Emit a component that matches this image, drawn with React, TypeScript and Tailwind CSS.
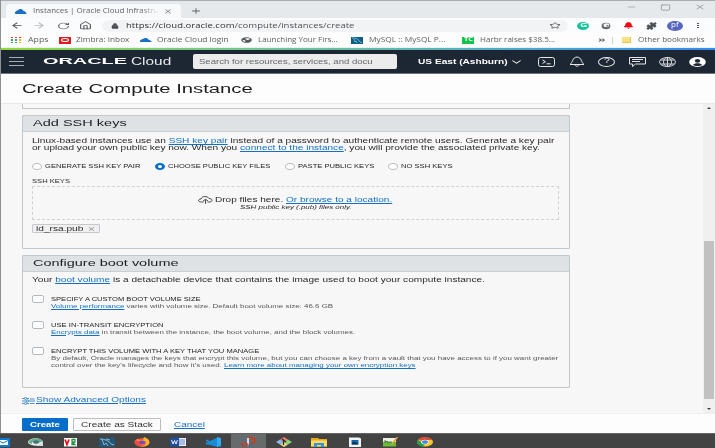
import { useLayoutEffect, useRef, type ReactNode } from "react";
import {
  ArrowLeft, ArrowRight, RotateCw, House, Lock, Star, Bell, Puzzle, X, Plus, Minus, Square,
  ChevronDown,
} from "lucide-react";

const ui = "font-['Open_Sans',sans-serif]";
const stretch = { preserveAspectRatio: "none" } as const;

/* One line of text, widened to fill the width of its box. */
function T({ className = "", children }: { className?: string; children: ReactNode }) {
  const outer = useRef<HTMLSpanElement>(null);
  const inner = useRef<HTMLSpanElement>(null);
  useLayoutEffect(() => {
    if (outer.current && inner.current) {
      inner.current.style.transform = `scaleX(${outer.current.clientWidth / inner.current.offsetWidth})`;
    }
  }, []);
  return (
    <span ref={outer} className={`block shrink-0 leading-[1.15] ${className}`}>
      <span ref={inner} className="block w-max origin-left whitespace-nowrap">{children}</span>
    </span>
  );
}

function A({ children }: { children: ReactNode }) {
  return <a className="text-[#1470c4] underline decoration-[0.6px] underline-offset-1">{children}</a>;
}

function CloudMark({ className }: { className: string }) {
  return (
    <svg viewBox="0 0 24 12" {...stretch} className={`shrink-0 ${className}`}>
      <path d="M3 12a3 3 0 0 1-1-6 4 4 0 0 1 4-3 6 6 0 0 1 11 2 4 4 0 0 1 4 3 2.200 2.200 0 0 1 1 4z" fill="#1b6fc2" />
    </svg>
  );
}

function TabStrip() {
  return (
    <div className="flex h-[18px] items-end border-t border-[#a9adb1] bg-[#e6e9ec] pl-[5px]">
      <div className="flex h-[14px] w-[175px] items-center rounded-t-[4px] bg-[#f8f9fb] pl-[9px]">
        <CloudMark className="h-[5px] w-[12px]" />
        <div className="ml-[6px] w-[126px] overflow-hidden [mask-image:linear-gradient(90deg,#000_85%,transparent)]">
          <T className="w-[126px] text-[7px] text-[#5f6368]">Instances | Oracle Cloud Infrastru</T>
        </div>
        <X {...stretch} className="ml-[4px] h-[7px] w-[10px] text-[#5f6368]" />
      </div>
      <Plus {...stretch} className="mb-[3px] ml-[9px] h-[8px] w-[12px] text-[#4c5055]" />
      <div className="mb-[7px] ml-auto flex items-center text-[#8b8f94]">
        <Minus {...stretch} strokeWidth={1.5} className="h-[8px] w-[11px]" />
        <Square {...stretch} strokeWidth={2} className="ml-[23px] h-[7px] w-[11px]" />
        <X {...stretch} strokeWidth={1.8} className="mr-[9px] ml-[23px] h-[8px] w-[12px]" />
      </div>
    </div>
  );
}

function Toolbar() {
  return (
    <div className="flex h-[15px] items-center bg-[#fbfcfd] text-[#4c5055]">
      <ArrowLeft {...stretch} className="ml-[9px] h-[9px] w-[14px]" />
      <ArrowRight {...stretch} className="ml-[8px] h-[9px] w-[14px] text-[#b3b6ba]" />
      <RotateCw {...stretch} className="ml-[11px] h-[8px] w-[13px]" />
      <House {...stretch} className="ml-[9px] h-[9px] w-[13px]" />
      <div className="ml-[10px] flex h-[12px] w-[466px] items-center rounded-[8px/6px] bg-[#f1f3f4] pl-[9px]">
        <Lock {...stretch} fill="currentColor" className="h-[6px] w-[8px]" />
        <T className={`${ui} ml-[7px] w-[228px] text-[7.500px] text-[#50545a]`}>
          <span className="text-[#303236]">https://cloud.oracle.com</span>/compute/instances/create
        </T>
        <Star {...stretch} className="mr-[7px] ml-auto h-[7px] w-[12px]" />
      </div>
      <span className="ml-[9px] flex h-[8px] w-[12px] items-center justify-center rounded-[50%] bg-[#15c39a]">
        <T className="w-[7px] text-[6px] font-bold text-white">G</T>
      </span>
      <svg viewBox="0 0 12 8" {...stretch} className="ml-[12px] h-[8px] w-[10px]">
        <ellipse cx="6" cy="4" rx="5.300" ry="3.300" fill="#686b6e" /><ellipse cx="6.500" cy="3.200" rx="3.500" ry="1.900" fill="#f3f3f3" />
        <path d="M6.500 3h2.500v1.500h-2.500z" fill="#777" />
      </svg>
      <Bell {...stretch} fill="#f00615" className="ml-[12px] h-[7px] w-[11px] text-[#f00615]" />
      <Puzzle {...stretch} fill="currentColor" className="ml-[12px] h-[8px] w-[11px]" />
      <span className="ml-[10px] flex h-[10px] w-[16px] items-center justify-center rounded-[50%] bg-[#5566bd]">
        <T className="w-[8px] text-[7px] text-white">pf</T>
      </span>
      <span className="ml-[14px] flex flex-col gap-px">
        <i className="h-[1px] w-[2px] bg-[#55595e]" /><i className="h-[1px] w-[2px] bg-[#55595e]" /><i className="h-[1px] w-[2px] bg-[#55595e]" />
      </span>
    </div>
  );
}

const dots = ["#e33b2e", "#e33b2e", "#e33b2e", "#32a853", "#4285f4", "#f0b51b", "#32a853", "#32a853", "#f0b51b"];

function Bookmarks() {
  return (
    <div className="flex h-[14px] items-center bg-[#fdfdfd] text-[7px] text-[#5a5d61]">
      <div className="ml-[10px] grid h-[6px] w-[10px] shrink-0 grid-cols-3 gap-x-[2px] gap-y-[1px]">
        {dots.map((c, i) => <i key={i} style={{ backgroundColor: c }} />)}
      </div>
      <T className="ml-[7px] w-[20px]">Apps</T>
      <span className="ml-[11px] flex h-[7px] w-[12px] shrink-0 items-center justify-center bg-[#e21b22]">
        <i className="h-[4px] w-[8px] rounded-[50%] border border-white" />
      </span>
      <T className="ml-[5px] w-[53px]">Zimbra: Inbox</T>
      <CloudMark className="ml-[11px] h-[4px] w-[12px]" />
      <T className="ml-[5px] w-[72px]">Oracle Cloud login</T>
      <svg viewBox="0 0 12 8" {...stretch} className="ml-[12px] h-[6px] w-[11px] shrink-0">
        <ellipse cx="6" cy="4" rx="5.800" ry="3.800" fill="#54575c" />
        <path d="M1.500 3.500l3.500 1-1 2-1.500-1zM5 1.500h4l1 1.500-3 1-2-1z" fill="#fafafa" />
      </svg>
      <T className="ml-[6px] w-[80px]">Launching Your Firs...</T>
      <span className="ml-[13px] flex h-[7px] w-[12px] shrink-0 bg-[#0c5f87]">
        <svg viewBox="0 0 12 7" className="h-[7px] w-[12px]"><path d="M1 1c4-.5 7 1.500 8 4l2 1M3 2l1 3 1-1 1 2" stroke="#9fd2e4" strokeWidth=".7" fill="none" /></svg>
      </span>
      <T className="ml-[6px] w-[76px]">MySQL :: MySQL P...</T>
      <span className="ml-[17px] flex h-[7px] w-[12px] shrink-0 items-center justify-center bg-[#13c44b]">
        <T className="w-[9px] text-[5px] font-bold text-white">TC</T>
      </span>
      <T className="ml-[6px] w-[75px]">Harbr raises $38.5...</T>
      <T className="ml-[43px] w-[7px] font-bold">»</T>
      <i className="ml-[7px] h-[7px] w-px bg-[#cfd1d3]" />
      <i className="ml-[9px] h-[6px] w-[9px] border-r border-b border-[#efc44b] bg-[#fbdf83]" />
      <T className="ml-[7px] w-[66px]">Other bookmarks</T>
    </div>
  );
}

function Header() {
  return (
    <header className="flex h-[24px] items-center border-b border-[#6d757d] bg-[#1c2733] text-white">
      <div className="ml-[8px] flex w-[15px] flex-col gap-[3px]">
        <i className="h-px bg-[#a6acb3]" /><i className="h-px bg-[#a6acb3]" /><i className="h-px bg-[#a6acb3]" />
      </div>
      <T className="ml-[19px] w-[84px] text-[9px] font-bold">ORACLE</T>
      <T className="ml-[4px] w-[40px] text-[10px] text-[#e8eaec]">Cloud</T>
      <div className="ml-[22px] flex h-[15px] w-[204px] items-center rounded-[2px] bg-[#ececec] pt-px pl-[6px]">
        <T className="w-[174px] text-[7.800px] text-[#63676b]">Search for resources, services, and docu</T>
      </div>
      <T className="ml-[21px] w-[90px] text-[8px] font-bold">US East (Ashburn)</T>
      <ChevronDown {...stretch} strokeWidth={1.8} className="ml-px h-[10px] w-[15px] shrink-0" />
      <svg viewBox="0 0 17 10" fill="none" stroke="#e4e7ea" className="ml-[14px] h-[10px] w-[17px] shrink-0">
        <rect x=".5" y=".5" width="16" height="9" rx="2" /><path d="M4.500 3l3 1.700-3 1.700M8.500 6.800h4" />
      </svg>
      <svg viewBox="0 0 16 11" fill="none" stroke="#e4e7ea" className="ml-[14px] h-[11px] w-[16px] shrink-0">
        <path d="M1 8.500c3-2 2-7 7-7.500 5 .5 4 5.500 7 7.500zM6 8.700c0 2 4 2 4 0" />
      </svg>
      <span className="ml-[13px] flex h-[10px] w-[17px] shrink-0 items-center justify-center rounded-[50%] border border-[#e4e7ea]">
        <T className="w-[6px] text-[7px]">?</T>
      </span>
      <svg viewBox="0 0 17 10" fill="none" stroke="#e4e7ea" className="ml-[14px] h-[10px] w-[17px] shrink-0">
        <path d="M.5.5h16v6.500h-10l-3 2.500v-2.500h-3zM3 2.500h11M3 4.500h8" />
      </svg>
      <svg viewBox="0 0 17 10" fill="none" stroke="#e4e7ea" strokeWidth=".9" className="ml-[13px] h-[10px] w-[17px] shrink-0">
        <ellipse cx="8.500" cy="5" rx="8" ry="4.500" /><ellipse cx="8.500" cy="5" rx="4" ry="4.500" /><path d="M8.500.5v9M1.500 3h14M1.500 7h14" />
      </svg>
      <svg viewBox="0 0 17 10" className="ml-[13px] h-[10px] w-[17px] shrink-0">
        <ellipse cx="8.500" cy="5" rx="8.300" ry="4.900" fill="white" /><ellipse cx="8.500" cy="3.800" rx="2.700" ry="1.900" fill="#1c2733" />
        <path d="M4 8c1-2.500 8-2.500 9 0-2 1.300-7 1.300-9 0z" fill="#1c2733" />
      </svg>
    </header>
  );
}

function Radio({ label, on, gap, w }: { label: string; on?: boolean; gap: string; w: string }) {
  return (
    <label className={`flex shrink-0 items-center ${gap}`}>
      <i className={`h-[7px] w-[10px] rounded-[50%] ${on ? "border-x-[3.500px] border-y-[2px] border-[#066dcb] bg-white" : "border border-[#b9bdc1] bg-white"}`} />
      <T className={`ml-[3px] text-[6px] text-[#222] ${w}`}>{label}</T>
    </label>
  );
}

function Check({ label, w, children }: { label: string; w: string; children: ReactNode }) {
  return (
    <div className="flex h-[26px]">
      <i className="h-[8px] w-[12px] shrink-0 rounded-[2px] border border-[#b4b9be] bg-white" />
      <div className="ml-[7px] pt-px text-[6px] text-[#55585b]">
        <div className="flex h-[7px] items-center text-[#222]"><T className={w}>{label}</T></div>
        {children}
      </div>
    </div>
  );
}

function Card({ title, w, h, children }: { title: string; w: string; h: string; children: ReactNode }) {
  return (
    <section className={`mt-[6px] w-[548px] rounded-[1px] border border-[#c2c7cc] ${h}`}>
      <h2 className="flex h-[16px] items-center border-b border-[#c9ced2] bg-[#dee2e5] pl-[9.500px] text-[#1d1d1d]">
        <T className={`text-[9.400px] ${w}`}>{title}</T>
      </h2>
      <div className="pl-[9.400px] text-[#2a2a2a]">{children}</div>
    </section>
  );
}

function Content() {
  return (
    <main className="flex h-[310px] border-t border-[#e8e8e8] bg-[#f7f7f7]">
      <div className="w-[682px] pl-[21px]">
        <div className="h-[5px] w-[548px] rounded-b-[1px] border border-t-0 border-[#c2c7cc]" />
        <Card title="Add SSH keys" w="w-[93px]" h="h-[134px]">
          <div className="pt-[5px] text-[7.200px]">
            <div className="flex h-[7px] items-center">
              <T className="w-[522px] leading-[7px]!">Linux-based instances use an <A>SSH key pair</A> instead of a password to authenticate remote users. Generate a key pair</T>
            </div>
            <div className="flex h-[7px] items-center">
              <T className="w-[508px] leading-[7px]!">or upload your own public key now. When you <A>connect to the instance</A>, you will provide the associated private key.</T>
            </div>
          </div>
          <div className="mt-[11px] flex h-[8px] items-center">
            <Radio label="GENERATE SSH KEY PAIR" gap="" w="w-[95px]" />
            <Radio on label="CHOOSE PUBLIC KEY FILES" gap="ml-[15px]" w="w-[102px]" />
            <Radio label="PASTE PUBLIC KEYS" gap="ml-[15px]" w="w-[76px]" />
            <Radio label="NO SSH KEYS" gap="ml-[14px]" w="w-[52px]" />
          </div>
          <div className="mt-[8px] flex h-[6px] items-center text-[5.800px]"><T className="w-[38px]">SSH KEYS</T></div>
          <div className="mt-[2px] h-[34px] w-[527px] border border-dashed border-[#d0d3d6] pt-[9px]">
            <div className="flex h-[8px] items-center pl-[165px] text-[7.500px]">
              <svg viewBox="0 0 15 8" fill="none" stroke="#333" strokeWidth=".9" className="h-[8px] w-[15px] shrink-0">
                <path d="M5.500 6H3.500C-.5 6-.2 3 3 3 4-.2 9.500-.2 11 2.500c4 0 4 3.500.5 3.500H9.500M7.500 7.800V3.500M5 5l2.500-1.700L10 5" />
              </svg>
              <T className="ml-[2px] w-[177px]">Drop files here. <A>Or browse to a location.</A></T>
            </div>
            <div className="flex h-[7px] items-center pl-[207px] text-[5.800px] italic"><T className="w-[111px]">SSH public key (.pub) files only.</T></div>
          </div>
          <div className="mt-[4px] flex h-[9px] w-[68px] items-center rounded-[1px] border border-[#c5c9cd] bg-[#f0f0f0] pl-[3px] text-[7.200px]">
            <T className="w-[48px] leading-[7px]!">id_rsa.pub</T>
            <X {...stretch} className="mt-px ml-[3px] h-[6px] w-[9px] text-[#777]" />
          </div>
        </Card>
        <Card title="Configure boot volume" w="w-[145px]" h="h-[133px]">
          <div className="pt-[4px]">
            <div className="flex h-[9px] items-center text-[7.300px]">
              <T className="w-[453px]">Your <A>boot volume</A> is a detachable device that contains the image used to boot your compute instance.</T>
            </div>
          </div>
          <div className="mt-[10px]">
            <Check label="SPECIFY A CUSTOM BOOT VOLUME SIZE" w="w-[150px]">
              <div className="flex h-[6px] items-center"><T className="w-[282px]"><A>Volume performance</A> varies with volume size. Default boot volume size: 46.6 GB</T></div>
            </Check>
            <Check label="USE IN-TRANSIT ENCRYPTION" w="w-[112px]">
              <div className="flex h-[6px] items-center"><T className="w-[304px]"><A>Encrypts data</A> in transit between the instance, the boot volume, and the block volumes.</T></div>
            </Check>
            <Check label="ENCRYPT THIS VOLUME WITH A KEY THAT YOU MANAGE" w="w-[208px]">
              <div className="flex h-[7px] items-center"><T className="w-[507px]">By default, Oracle manages the keys that encrypt this volume, but you can choose a key from a vault that you have access to if you want greater</T></div>
              <div className="flex h-[7px] items-center"><T className="w-[364px]">control over the key's lifecycle and how it's used. <A>Learn more about managing your own encryption keys</A></T></div>
            </Check>
          </div>
        </Card>
        <div className="mt-[8px] flex h-[9px] items-center text-[7.800px]">
          <svg viewBox="0 0 13 8" fill="none" stroke="#2277c4" strokeWidth=".8" className="h-[8px] w-[13px]">
            <path d="M0 1.500h2M5 1.500h2M0 4h4M7 4h6M0 6.500h2M5 6.500h2M8 2h4.500M8 6.500h4.500" />
            <circle cx="3.500" cy="1.400" r="1.100" /><circle cx="5.500" cy="4" r="1.100" /><circle cx="3.500" cy="6.500" r="1.100" />
          </svg>
          <T className="ml-[1px] w-[110px]"><A>Show Advanced Options</A></T>
        </div>
      </div>
      <div className="ml-[20px] flex w-[12px] flex-col items-center bg-[#f0f0f0]">
        <i className="mt-[3px] border-x-[2.500px] border-b-[2px] border-x-transparent border-b-[#444]" />
        <i className="mt-[132px] h-[158px] w-[10px] bg-[#c1c1c1]" />
        <i className="mt-[9px] border-x-[2.500px] border-t-[2px] border-x-transparent border-t-[#444]" />
      </div>
    </main>
  );
}

function Footer() {
  return (
    <footer className="flex h-[20px] items-center border-t border-[#efefef] bg-[#fdfdfd] pt-[2px] pl-[21px] text-[8px]">
      <button className="flex h-[13px] w-[46px] items-center justify-center rounded-[1px] bg-[#066dcb] font-bold text-white"><T className="w-[30px]">Create</T></button>
      <button className="ml-[5px] flex h-[13px] w-[88px] items-center justify-center rounded-[1px] border border-[#b9bec3] bg-[#fbfbfb] text-[#333]"><T className="w-[72px]">Create as Stack</T></button>
      <T className="ml-[13px] w-[31px]"><A>Cancel</A></T>
    </footer>
  );
}

function TaskIcon({ active, shift = "", children }: { active?: boolean; shift?: string; children: ReactNode }) {
  return (
    <div className={`flex h-[14px] w-[35.400px] shrink-0 items-center justify-center pt-[2px] ${shift} ${active ? "bg-[#686b6b]" : ""}`}>
      <svg viewBox="0 0 18 10" className="h-[10px] w-[18px]">{children}</svg>
    </div>
  );
}

function Taskbar() {
  return (
    <div className="h-[15px] overflow-hidden border-t border-[#666] bg-[#434343]">
      <div className="-ml-[17px] flex">
        <TaskIcon shift="pl-[5px]"><rect x="1" y="1" width="15" height="9" fill="#087bd4" /><path d="M4 3h10v5H4z" fill="#fff" /><path d="M5 4l4 2 5-2.500" stroke="#087bd4" fill="none" /></TaskIcon>
        <TaskIcon>
          <ellipse cx="8.500" cy="5" rx="7.500" ry="3.700" fill="#e9efed" /><path d="M2 6C1 1 12 0 16 4L12 6C10 3 5 3 5 7z" fill="#65ae8c" />
          <ellipse cx="9" cy="5" rx="3" ry="1.800" fill="#4b7178" /><path d="M9 7c4 2 5-1 7-1v3h-6z" fill="#d5ddda" />
        </TaskIcon>
        <TaskIcon>
          <rect x="2" y="1" width="13" height="8.500" fill="#fff" /><path d="M3 2.500l2 5 2-5" fill="none" stroke="#de1721" strokeWidth="1.800" />
          <path d="M10 5h3V2.500h-3V5l3 2.700h-3V5" fill="none" stroke="#22954a" strokeWidth="1.300" />
        </TaskIcon>
        <TaskIcon><rect x="1" y=".5" width="16" height="9.500" fill="#245777" /><path d="M2 2c5 0 9 2 11 5l3 1M4 2l2 6 2-2 2 3M8 2l4 1" fill="none" stroke="#a8c9d5" strokeWidth=".8" /></TaskIcon>
        <TaskIcon>
          <ellipse cx="9" cy="5.500" rx="7.500" ry="4.200" fill="#ff5a2b" /><path d="M1.500 4l3-2 2 1.500L10 3l1-3c3 1 6 3 5.500 6-1 3-6 4-10 3z" fill="#ffb02a" />
          <ellipse cx="9" cy="5.500" rx="3.500" ry="2" fill="#8048b2" /><path d="M2 3l5 1-2 2 4 2 4-1c-3 3-10 3-11-1z" fill="#f74741" />
        </TaskIcon>
        <TaskIcon><rect x="8" y="1" width="9" height="8" fill="#e9eef9" /><path d="M10 3h6M10 5h6M10 7h6" stroke="#5d7dbb" strokeWidth=".9" /><path d="M1 1l9-1v10l-9-1z" fill="#214f9c" /><path d="M2.500 3l1.500 4 1.500-3.500L7 7l1.500-4" stroke="#fff" fill="none" strokeWidth=".9" /></TaskIcon>
        <TaskIcon><path d="M14 .5L4 6 2 5v2l12 3" fill="#168cd5" /><path d="M2 3l11 6V1.500L2 7" fill="none" stroke="#168cd5" strokeWidth="1.600" /><path d="M13 0l4 1v8l-4 1z" fill="#32a8ee" /></TaskIcon>
        <TaskIcon active>
          <path d="M9 1c6-1 8 2 6 4-1 1.500-4 2-6 1.500" fill="none" stroke="#cf3d20" strokeWidth="2" /><path d="M8 1h2v8H8z" fill="#d6dad9" />
          <ellipse cx="5.500" cy="7.500" rx="3" ry="1.500" fill="none" stroke="#cb3927" strokeWidth="1.200" /><path d="M3 1l5 4" stroke="#3479a8" /><ellipse cx="11.500" cy="8" rx="2" ry="1.200" fill="none" stroke="#2e75aa" />
        </TaskIcon>
        <TaskIcon>
          <path d="M9 0l4 2.500-4 2.500-4-2.500z" fill="#ef7b73" /><path d="M5 2.500L9 5 5 7.500 1 5z" fill="#8db6ed" /><path d="M13 2.500L17 5l-4 2.500L9 5z" fill="#8bd578" /><path d="M9 5l4 2.500L9 10 5 7.500z" fill="#edda80" />
          <path d="M7 2l4 3M8.500 3v5" stroke="#252525" strokeWidth="1.200" />
        </TaskIcon>
        <TaskIcon><path d="M1 1h7l1 1h8v7.500H1z" fill="#e9a91b" /><path d="M1 3.500h16v6H1z" fill="#ffda67" /><path d="M4 10V6h10v4h-3V8H7v2z" fill="#3195dc" /></TaskIcon>
        <TaskIcon><path d="M3 .5h10l2 1v8.500H3z" fill="#f3f5f5" /><rect x="5.500" y="3" width="7" height="4.500" fill="#0e6ab1" /><path d="M6 6l2-1.500 4 2v1H6z" fill="#123453" /></TaskIcon>
        <TaskIcon><rect x="2" y="1" width="13" height="4" fill="#ecf1e4" /><path d="M2 5h13v4.500H2z" fill="#6dbb39" /><path d="M4 3v3M4 4.500h3v2M8 5h3M12 5h2" stroke="#315d29" strokeWidth=".8" fill="none" /><path d="M16.500 0L11 7" stroke="#e5a335" strokeWidth="1.500" /></TaskIcon>
        <TaskIcon>
          <ellipse cx="9" cy="5" rx="8" ry="4.600" fill="#f9c92b" /><path d="M9 5L2 2.500C4-.5 14-.5 16 3H9z" fill="#e34738" /><path d="M2 2.500L6 6l3 1-2 2.500C1 9 0 5 2 2.500z" fill="#279b50" />
          <ellipse cx="9" cy="5" rx="3.800" ry="2.300" fill="#fff" /><ellipse cx="9" cy="5" rx="3" ry="1.800" fill="#4184e9" />
        </TaskIcon>
      </div>
    </div>
  );
}

export default function App() {
  return (
    <div className="h-[448px] w-[715px] overflow-hidden bg-[#fcfcfc] font-['Liberation_Sans',sans-serif]">
      <div className="h-[433px] border-l border-[#8e9193]">
        <div className={ui}>
          <TabStrip />
          <Toolbar />
          <Bookmarks />
        </div>
        <div className="h-[3px] border-t border-[#e9f1ee] bg-linear-to-r from-[#92d83b] via-[#65bea8] to-[#368aee]" />
        <Header />
        <div className="flex h-[29px] items-center bg-[#fdfdfd] pt-px pl-[21px] text-[12.500px] text-[#1d1d1d]">
          <h1><T className="w-[230px]">Create Compute Instance</T></h1>
        </div>
        <Content />
        <Footer />
      </div>
      <Taskbar />
    </div>
  );
}
